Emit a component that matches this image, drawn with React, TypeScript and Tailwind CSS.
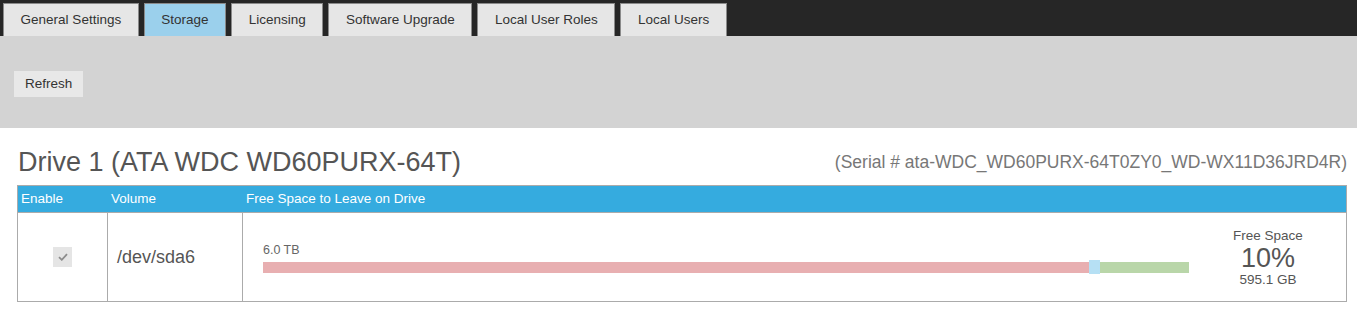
const tabs = ['General Settings', 'Storage', 'Licensing', 'Software Upgrade', 'Local User Roles', 'Local Users'];

export default function App() {
  return (
    <div className="w-[1357px] h-[320px] bg-white font-['Liberation_Sans',Arial,sans-serif] text-[13.5px] text-[#333]">
      {/* tab bar */}
      <div className="h-[36px] bg-[#262626] flex items-end pl-[3px] gap-[5px]">
        {tabs.map((t) => (
          <div
            key={t}
            className={`h-[33px] px-[16.6px] pt-[1px] flex items-center border border-b-0 border-[#8a8a8a] ${
              t === 'Storage' ? 'bg-[#9bd0ec]' : 'bg-[#e6e6e6]'
            }`}
          >
            {t}
          </div>
        ))}
      </div>

      {/* toolbar */}
      <div className="h-[92px] bg-[#d3d3d3] pt-[35px] pl-[14px]">
        <button className="h-[26px] px-[11px] bg-[#e8e8e8] text-[#333] text-[13.5px]">Refresh</button>
      </div>

      {/* drive */}
      <div className="px-[17px] pt-[16px]">
        <div className="w-[1330px] flex items-end justify-between h-[34px] mb-[7px]">
          <h2 className="text-[27px] leading-[32px] text-[#555] pl-[1px]">Drive 1 (ATA WDC WD60PURX-64T)</h2>
          <span className="text-[17.5px] text-[#777] pb-[3px]">
            (Serial # ata-WDC_WD60PURX-64T0ZY0_WD-WX11D36JRD4R)
          </span>
        </div>

        <div className="w-[1330px] border border-[#ababab]">
          <div className="h-[26px] bg-[#35abdf] text-white flex items-center">
            <div className="w-[90px] pl-[3px]">Enable</div>
            <div className="w-[135px] pl-[3px]">Volume</div>
            <div className="pl-[3px]">Free Space to Leave on Drive</div>
          </div>
          <div className="h-[89px] flex border-t border-[#ababab]">
            <div className="w-[90px] flex items-center justify-center border-r border-[#ababab]">
              <div className="w-[19px] h-[20px] bg-[#e5e5e5] flex items-center justify-center">
                <svg width="10" height="8" viewBox="0 0 10 8">
                  <path d="M1 4.2 L3.8 6.8 L9 1.2" fill="none" stroke="#8c8c8c" strokeWidth="1.8" />
                </svg>
              </div>
            </div>
            <div className="w-[135px] flex items-center pl-[9px] border-r border-[#ababab] text-[18px] text-[#555]">
              /dev/sda6
            </div>
            <div className="flex-1 flex items-center">
              <div className="pl-[20px] w-[947px] pt-[3px]">
                <div className="text-[12.5px] text-[#666] leading-[14px] mb-[3px]">6.0 TB</div>
                <div className="flex items-center h-[14px]">
                  <div className="w-[826px] h-[11px] bg-[#e8afb1]" />
                  <div className="w-[11px] h-[14px] bg-[#b6e0f4]" />
                  <div className="w-[89px] h-[11px] bg-[#b9d6a9]" />
                </div>
              </div>
              <div className="flex-1 flex flex-col items-center text-[#555] pt-[1px]">
                <div className="text-[13.5px] leading-[16px]">Free Space</div>
                <div className="text-[27px] leading-[28px]">10%</div>
                <div className="text-[13.5px] leading-[16px]">595.1 GB</div>
              </div>
            </div>
          </div>
        </div>
      </div>
    </div>
  );
}
